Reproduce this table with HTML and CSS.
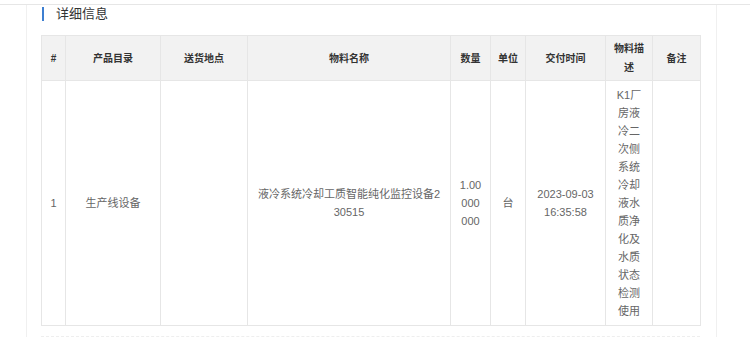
FILE: index.html
```html
<!DOCTYPE html>
<html lang="zh-CN">
<head>
<meta charset="utf-8">
<title>详细信息</title>
<link rel="stylesheet" href="styles.css">
</head>
<body>
<div class="topline"></div>
<div class="panel">
  <div class="title"><span class="bar"></span><span class="title-text">详细信息</span></div>
  <table class="detail">
    <colgroup>
      <col class="c-idx">
      <col class="c-cat">
      <col class="c-addr">
      <col class="c-name">
      <col class="c-qty">
      <col class="c-unit">
      <col class="c-time">
      <col class="c-desc">
      <col class="c-note">
    </colgroup>
    <thead>
      <tr>
        <th>#</th>
        <th>产品目录</th>
        <th>送货地点</th>
        <th>物料名称</th>
        <th>数量</th>
        <th>单位</th>
        <th>交付时间</th>
        <th>物料描述</th>
        <th>备注</th>
      </tr>
    </thead>
    <tbody>
      <tr>
        <td>1</td>
        <td>生产线设备</td>
        <td></td>
        <td>液冷系统冷却工质智能纯化监控设备230515</td>
        <td>1.00000000</td>
        <td>台</td>
        <td>2023-09-03 16:35:58</td>
        <td>K1厂房液冷二次侧系统冷却液水质净化及水质状态检测使用</td>
        <td></td>
      </tr>
    </tbody>
  </table>
  <div class="footer-line"></div>
</div>
</body>
</html>
```

FILE: styles.css
```css
html, body {
  margin: 0;
  padding: 0;
  background: #ffffff;
  font-family: "Liberation Sans", "Noto Sans CJK SC", sans-serif;
}

.topline {
  height: 4px;
  border-bottom: 1px solid #e6e6e6;
}

.panel {
  margin-left: 26px;
  width: 691px;
  border-left: 1px solid #f0f0f0;
  border-right: 1px solid #f0f0f0;
  padding: 0 16px 0 14px;
  box-sizing: border-box;
}

.title {
  display: flex;
  align-items: center;
  height: 30px;
  padding-bottom: 12px;
  box-sizing: border-box;
}

.bar {
  display: block;
  width: 2px;
  height: 14px;
  background: #3d7fd1;
  margin-left: 1px;
}

.title-text {
  margin-left: 12px;
  font-size: 13px;
  line-height: 18px;
  color: #333333;
}

.detail {
  width: 659px;
  table-layout: fixed;
  border-collapse: collapse;
  border: 1px solid #e6e6e6;
}

.c-idx { width: 24px; }
.c-cat { width: 95px; }
.c-addr { width: 87px; }
.c-name { width: 203px; }
.c-qty { width: 40px; }
.c-unit { width: 35px; }
.c-time { width: 80px; }
.c-desc { width: 47px; }
.c-note { width: 48px; }

.detail th,
.detail td {
  border: 1px solid #e6e6e6;
  text-align: center;
  vertical-align: middle;
  word-break: break-all;
}

.detail th {
  background: #f2f2f2;
  color: #333333;
  font-size: 10px;
  font-weight: bold;
  line-height: 19px;
  height: 45px;
  padding: 3px 5px;
  box-sizing: border-box;
}

.detail td {
  color: #666666;
  font-size: 11px;
  line-height: 18px;
  padding: 5px 8px;
}

.footer-line {
  height: 10px;
  border-bottom: 1px dashed #eeeeee;
}
```
